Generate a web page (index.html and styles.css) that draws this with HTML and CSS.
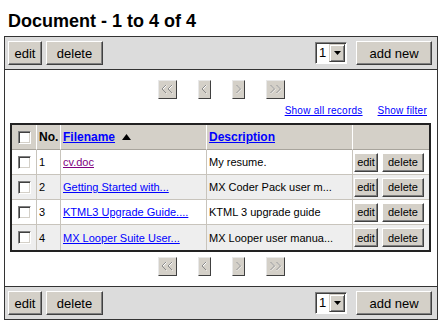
FILE: index.html
```html
<!DOCTYPE html>
<html lang="en">
<head>
    <meta charset="UTF-8">
    <title>Document list</title>
    <link rel="stylesheet" href="styles.css">
</head>
<body>
    <h1 class="title">Document - 1 to 4 of 4</h1>
    <div class="panel">
        <div class="toolbar">
            <div class="group">
                <button class="btn btn-edit">edit</button>
                <button class="btn btn-delete">delete</button>
            </div>
            <div class="group">
                <span class="select"><span class="select-value">1</span><span class="select-arrow"><svg width="7" height="4" viewBox="0 0 7 4"><polygon points="0,0 7,0 3.5,4" fill="#000"/></svg></span></span>
                <button class="btn btn-add">add new</button>
            </div>
        </div>

        <div class="content">
            <div class="pager">
                <span class="nav nav-wide"><svg width="11" height="9" viewBox="0 0 11 9"><polyline points="4.5,0.5 0.5,4.5 4.5,8.5" class="chev-hi"/><polyline points="10.5,0.5 6.5,4.5 10.5,8.5" class="chev-hi"/><polyline points="4,0 0,4 4,8" class="chev"/><polyline points="10,0 6,4 10,8" class="chev"/></svg></span>
                <span class="nav"><svg width="5" height="9" viewBox="0 0 5 9"><polyline points="4.5,0.5 0.5,4.5 4.5,8.5" class="chev-hi"/><polyline points="4,0 0,4 4,8" class="chev"/></svg></span>
                <span class="nav"><svg width="5" height="9" viewBox="0 0 5 9"><polyline points="1,0.5 5,4.5 1,8.5" class="chev-hi"/><polyline points="0.5,0 4.5,4 0.5,8" class="chev"/></svg></span>
                <span class="nav nav-wide"><svg width="11" height="9" viewBox="0 0 11 9"><polyline points="1,0.5 5,4.5 1,8.5" class="chev-hi"/><polyline points="7,0.5 11,4.5 7,8.5" class="chev-hi"/><polyline points="0.5,0 4.5,4 0.5,8" class="chev"/><polyline points="6.5,0 10.5,4 6.5,8" class="chev"/></svg></span>
            </div>

            <div class="links">
                <a href="#">Show all records</a>
                <a href="#">Show filter</a>
            </div>

            <table class="grid">
                <thead>
                    <tr>
                        <th class="col-check"><span class="checkbox"></span></th>
                        <th class="col-no">No.</th>
                        <th class="col-name"><a href="#">Filename</a> <svg class="sort" width="9" height="6" viewBox="0 0 9 6"><polygon points="4.5,0 9,6 0,6" fill="#000"/></svg></th>
                        <th class="col-desc"><a href="#">Description</a></th>
                        <th class="col-actions"></th>
                    </tr>
                </thead>
                <tbody>
                    <tr>
                        <td class="col-check"><span class="checkbox"></span></td>
                        <td>1</td>
                        <td><a href="#" class="visited">cv.doc</a></td>
                        <td>My resume.</td>
                        <td class="col-actions"><button class="btn btn-small btn-small-edit">edit</button><button class="btn btn-small btn-small-delete">delete</button></td>
                    </tr>
                    <tr class="alt">
                        <td class="col-check"><span class="checkbox"></span></td>
                        <td>2</td>
                        <td><a href="#">Getting Started with...</a></td>
                        <td>MX Coder Pack user m...</td>
                        <td class="col-actions"><button class="btn btn-small btn-small-edit">edit</button><button class="btn btn-small btn-small-delete">delete</button></td>
                    </tr>
                    <tr>
                        <td class="col-check"><span class="checkbox"></span></td>
                        <td>3</td>
                        <td><a href="#">KTML3 Upgrade Guide....</a></td>
                        <td>KTML 3 upgrade guide</td>
                        <td class="col-actions"><button class="btn btn-small btn-small-edit">edit</button><button class="btn btn-small btn-small-delete">delete</button></td>
                    </tr>
                    <tr class="alt">
                        <td class="col-check"><span class="checkbox"></span></td>
                        <td>4</td>
                        <td><a href="#">MX Looper Suite User...</a></td>
                        <td>MX Looper user manua...</td>
                        <td class="col-actions"><button class="btn btn-small btn-small-edit">edit</button><button class="btn btn-small btn-small-delete">delete</button></td>
                    </tr>
                </tbody>
            </table>

            <div class="pager pager-bottom">
                <span class="nav nav-wide"><svg width="11" height="9" viewBox="0 0 11 9"><polyline points="4.5,0.5 0.5,4.5 4.5,8.5" class="chev-hi"/><polyline points="10.5,0.5 6.5,4.5 10.5,8.5" class="chev-hi"/><polyline points="4,0 0,4 4,8" class="chev"/><polyline points="10,0 6,4 10,8" class="chev"/></svg></span>
                <span class="nav"><svg width="5" height="9" viewBox="0 0 5 9"><polyline points="4.5,0.5 0.5,4.5 4.5,8.5" class="chev-hi"/><polyline points="4,0 0,4 4,8" class="chev"/></svg></span>
                <span class="nav"><svg width="5" height="9" viewBox="0 0 5 9"><polyline points="1,0.5 5,4.5 1,8.5" class="chev-hi"/><polyline points="0.5,0 4.5,4 0.5,8" class="chev"/></svg></span>
                <span class="nav nav-wide"><svg width="11" height="9" viewBox="0 0 11 9"><polyline points="1,0.5 5,4.5 1,8.5" class="chev-hi"/><polyline points="7,0.5 11,4.5 7,8.5" class="chev-hi"/><polyline points="0.5,0 4.5,4 0.5,8" class="chev"/><polyline points="6.5,0 10.5,4 6.5,8" class="chev"/></svg></span>
            </div>
        </div>

        <div class="toolbar toolbar-bottom">
            <div class="group">
                <button class="btn btn-edit">edit</button>
                <button class="btn btn-delete">delete</button>
            </div>
            <div class="group">
                <span class="select"><span class="select-value">1</span><span class="select-arrow"><svg width="7" height="4" viewBox="0 0 7 4"><polygon points="0,0 7,0 3.5,4" fill="#000"/></svg></span></span>
                <button class="btn btn-add">add new</button>
            </div>
        </div>
    </div>
</body>
</html>
```

FILE: styles.css
```css
body {
    margin: 0;
    padding: 0 4px;
    font-family: "Liberation Sans", Arial, sans-serif;
    background: #fff;
    color: #000;
}
.title {
    margin: 11px 0 4px 4px;
    font-size: 18px;
    line-height: 21px;
    font-weight: bold;
}
.panel {
    width: 434px;
    box-sizing: border-box;
    border: 1px solid #333;
}
.toolbar {
    height: 32px;
    background: #dcdcdc;
    border-bottom: 1px solid #333;
    display: flex;
    justify-content: space-between;
    align-items: center;
    padding: 0 5px 0 3px;
}
.toolbar-bottom {
    border-bottom: none;
    border-top: 1px solid #333;
}
.group {
    display: flex;
    align-items: center;
    gap: 4px;
}
.btn {
    font-family: "Liberation Sans", Arial, sans-serif;
    font-size: 13px;
    color: #000;
    height: 24px;
    padding: 0;
    background: #d4d0c8;
    border: 1px solid;
    border-color: #fff #404040 #404040 #fff;
    box-shadow: inset -1px -1px 0 #808080;
    box-sizing: border-box;
    cursor: pointer;
}
.btn-edit { width: 34px; }
.btn-delete { width: 57px; }
.btn-add { width: 76px; margin-left: 5px; }
.select {
    display: flex;
    align-items: center;
    width: 32px;
    height: 22px;
    box-sizing: border-box;
    background: #fff;
    border: 1px solid;
    border-color: #808080 #fff #fff #808080;
    box-shadow: inset 1px 1px 0 #404040;
    padding: 1px 1px 1px 2px;
}
.select-value {
    flex: 1;
    font-size: 13px;
    line-height: 18px;
    padding-left: 1px;
}
.select-arrow {
    width: 16px;
    height: 18px;
    box-sizing: border-box;
    background: #d4d0c8;
    border: 1px solid;
    border-color: #d4d0c8 #404040 #404040 #d4d0c8;
    box-shadow: inset 1px 1px 0 #fff, inset -1px -1px 0 #808080;
    display: flex;
    align-items: center;
    justify-content: center;
}
.content {
    background: #fff;
    padding: 10px 5px 10px 5px;
}
.pager {
    display: flex;
    justify-content: center;
    gap: 21px;
    height: 19px;
}
.pager-bottom {
    margin-top: 5px;
}
.nav {
    width: 13px;
    height: 19px;
    box-sizing: border-box;
    background: #d4d0c8;
    border: 1px solid;
    border-color: #e8e8e8 #404040 #404040 #e8e8e8;
    display: flex;
    align-items: center;
    justify-content: center;
}
.nav-wide { width: 19px; }
.nav svg { overflow: visible; }
.chev {
    fill: none;
    stroke: #8c8c8c;
    stroke-width: 1;
}
.chev-hi {
    fill: none;
    stroke: #fff;
    stroke-width: 1;
}
.links {
    display: flex;
    justify-content: flex-end;
    gap: 15px;
    margin: 6px 5px 6px 0;
    font-size: 10px;
    line-height: 12px;
    letter-spacing: 0.25px;
}
.links a { color: #0000ff; }
.grid {
    width: 421px;
    table-layout: fixed;
    border-collapse: separate;
    border-spacing: 0;
    border: 2px solid #222;
    font-size: 11px;
}
.grid tr { height: 25px; }
.grid th,
.grid td {
    box-sizing: border-box;
    padding: 0 2px;
    text-align: left;
    border-right: 1px solid #c8c4bc;
    border-bottom: 1px solid #c8c4bc;
    vertical-align: middle;
    white-space: nowrap;
    overflow: hidden;
}
.grid tr > :last-child { border-right: none; }
.grid tbody tr:last-child td { border-bottom: none; }
.grid th {
    background: #d4d0c8;
    font-size: 12px;
    font-weight: bold;
    border-color: #fff;
    border-bottom-color: #a8a49c;
}
.grid th a { color: #0000ff; }
.grid td a { color: #0000ff; }
.grid td a.visited { color: #800080; }
.grid tbody tr { background: #fff; }
.grid tbody tr.alt { background: #eeeeee; }
.col-check { width: 25px; text-align: center !important; padding: 0 !important; }
.col-no { width: 24px; }
.col-name { width: 146px; }
.col-desc { width: 146px; }
.sort { margin-left: 4px; vertical-align: 1px; }
.checkbox {
    display: inline-block;
    width: 13px;
    height: 13px;
    box-sizing: border-box;
    background: #fff;
    border: 1px solid;
    border-color: #808080 #fff #fff #808080;
    box-shadow: inset 1px 1px 0 #404040, inset -1px -1px 0 #d4d0c8;
    vertical-align: middle;
}
.grid td.col-actions {
    padding: 0 0 0 1px;
}
.btn-small {
    font-size: 11px;
    height: 19px;
    vertical-align: middle;
}
.btn-small-edit { width: 24px; margin-right: 4px; }
.btn-small-delete { width: 42px; }
```
